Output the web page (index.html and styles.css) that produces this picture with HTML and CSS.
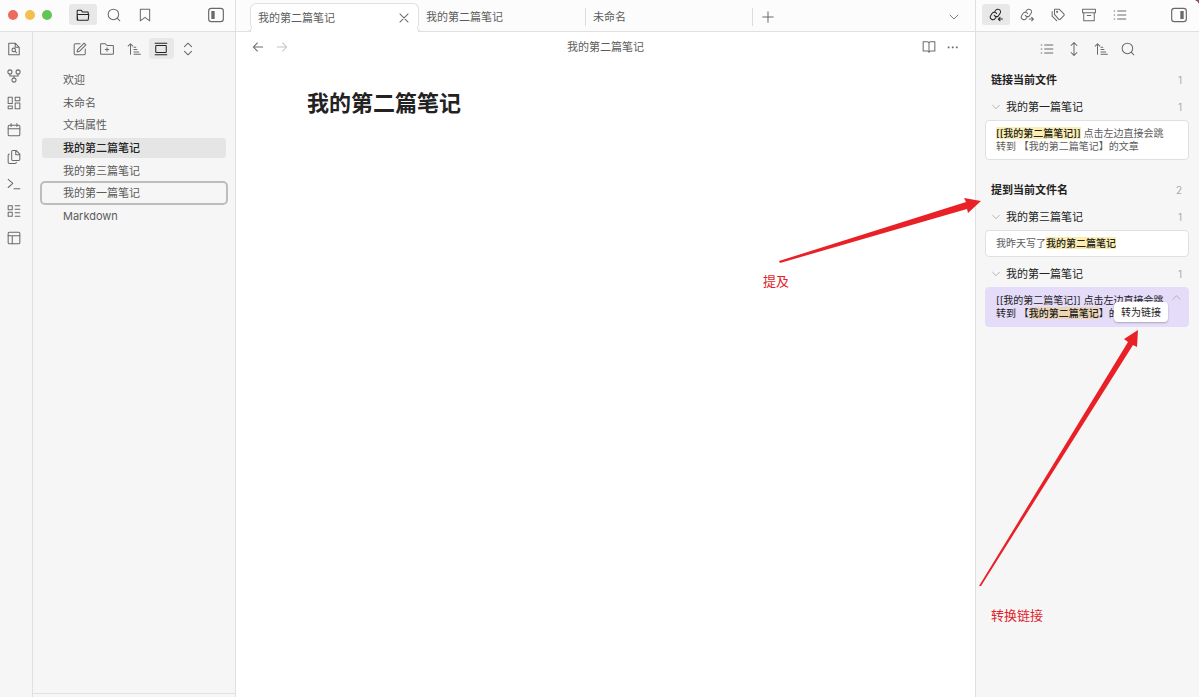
FILE: index.html
```html
<!DOCTYPE html>
<html lang="zh-CN">
<head>
  <meta charset="UTF-8" />
  <meta name="viewport" content="width=device-width, initial-scale=1.0" />
  <title>我的第二篇笔记</title>
  <link rel="stylesheet" href="styles.css">
</head>
<body>
  <!-- shared icons -->
  <svg class="sprite" aria-hidden="true">
    <symbol id="i-list" viewBox="0 0 24 24"><path d="M8 5h14M8 12h14M8 19h14M2 5h1M2 12h1M2 19h1"/></symbol>
    <symbol id="i-search" viewBox="0 0 24 24"><circle cx="11" cy="11" r="9"/><path d="m22 22-4.500-4.500"/></symbol>
    <symbol id="i-sort" viewBox="0 0 24 24"><path d="m2 7 4-4 4 4M6 3v18M12 9h3M12 13h5M12 17h8M12 21h11"/></symbol>
    <symbol id="i-down" viewBox="0 0 24 24"><path d="m4 8 8 8 8-8"/></symbol>
    <symbol id="i-link" viewBox="0 0 24 24"><path d="M9 12.500a4.500 4.500 0 0 0 7.500.5l2.500-4a4.500 4.500 0 0 0-7.500-5L10 6M13 9.500a4.500 4.500 0 0 0-7.500-.5L3 13a4.500 4.500 0 0 0 7.500 5l1.500-2"/></symbol>
  </svg>

  <div class="app">
    <aside class="left">
      <header class="topbar">
        <div class="lights"><i class="red"></i><i class="yellow"></i><i class="green"></i></div>
        <nav class="icons">
          <button class="active" aria-label="文件列表"><svg viewBox="0 0 24 24"><path d="M3 21a1 1 0 0 1-1-1V5a1 1 0 0 1 1-1h6l2.500 3H20a1 1 0 0 1 1 1v3M2 11h20l-1 9a1 1 0 0 1-1 1H3z"/></svg></button>
          <button aria-label="搜索"><svg><use href="#i-search"/></svg></button>
          <button aria-label="书签"><svg viewBox="0 0 24 24"><path d="M4 2h16v20l-8-6-8 6z"/></svg></button>
        </nav>
        <button class="toggle" aria-label="折叠左侧栏"><svg viewBox="0 0 24 24"><rect x="1" y="2" width="22" height="20" rx="4"/><path class="solid" d="M5 6h5v12H5z"/></svg></button>
      </header>
      <div class="left-body">
        <nav class="ribbon">
          <button aria-label="快速切换"><svg viewBox="0 0 24 24"><path d="M14 2H3v20h18V9zM14 2v7h7"/><circle cx="11.500" cy="13.500" r="3"/><path d="m14 16 2.500 2.500"/></svg></button>
          <button aria-label="关系图谱"><svg viewBox="0 0 24 24"><circle cx="5" cy="5" r="3.500"/><circle cx="19" cy="5" r="3.500"/><circle cx="12" cy="19" r="3.500"/><path d="M5 8.500V12h14V8.500M12 12v3.500"/></svg></button>
          <button aria-label="白板"><svg viewBox="0 0 24 24"><path d="M2 2h7v11H2zM14 2h8v6h-8zM14 12h8v10h-8zM2 17h7v5H2z"/></svg></button>
          <button aria-label="日记"><svg viewBox="0 0 24 24"><rect x="2" y="4" width="20" height="18" rx="2"/><path d="M2 10h20M7 1v5M17 1v5"/></svg></button>
          <button aria-label="模板"><svg viewBox="0 0 24 24"><path d="M16 1H10a2 2 0 0 0-2 2v13a2 2 0 0 0 2 2h10a2 2 0 0 0 2-2V7zM15 1v7h7M4 7a2 2 0 0 0-2 2v12a2 2 0 0 0 2 2h10a2 2 0 0 0 2-2"/></svg></button>
          <button aria-label="命令面板"><svg viewBox="0 0 24 24"><path d="m2 4 8 7-8 7M12 20h10"/></svg></button>
          <button aria-label="列表"><svg viewBox="0 0 24 24"><path d="M2 3h7v7H2zM2 14h7v7H2zM14 3h8M14 9h8M14 15h8M14 21h8"/></svg></button>
          <button aria-label="工作区"><svg viewBox="0 0 24 24"><rect x="2" y="2" width="20" height="20" rx="2"/><path d="M2 8h20M9 8v14"/></svg></button>
        </nav>
        <div class="files">
          <div class="tools">
            <button aria-label="新建笔记"><svg viewBox="0 0 24 24"><path d="M12 3H4a2 2 0 0 0-2 2v15a2 2 0 0 0 2 2h15a2 2 0 0 0 2-2v-8M19 2l3 3L11 16l-4 1 1-4z"/></svg></button>
            <button aria-label="新建文件夹"><svg viewBox="0 0 24 24"><path d="M1 20V4a1 1 0 0 1 1-1h7l3 3h10a1 1 0 0 1 1 1v13a1 1 0 0 1-1 1H2a1 1 0 0 1-1-1zM12 10v6M9 13h6"/></svg></button>
            <button aria-label="排序"><svg><use href="#i-sort"/></svg></button>
            <button class="active" aria-label="自动定位"><svg viewBox="0 0 24 24"><rect x="3" y="6" width="18" height="12" rx="1"/><path d="M2 2h20M2 22h20"/></svg></button>
            <button aria-label="展开全部"><svg viewBox="0 0 24 24"><path d="m6 8 6-6 6 6M6 16l6 6 6-6"/></svg></button>
          </div>
          <div class="file-list">
            <a href="#">欢迎</a>
            <a href="#">未命名</a>
            <a href="#">文档属性</a>
            <a href="#" class="current">我的第二篇笔记</a>
            <a href="#">我的第三篇笔记</a>
            <a href="#" class="focused">我的第一篇笔记</a>
            <a href="#">Markdown</a>
          </div>
          <div class="files-foot"></div>
        </div>
      </div>
    </aside>

    <main class="editor">
      <header class="topbar tabs">
        <div class="tab open">
          <span>我的第二篇笔记</span>
          <button aria-label="关闭"><svg viewBox="0 0 24 24"><path d="m5 5 14 14M19 5 5 19"/></svg></button>
        </div>
        <div class="tab"><span>我的第二篇笔记</span></div>
        <div class="tab"><span>未命名</span></div>
        <button class="add" aria-label="新标签页"><svg viewBox="0 0 24 24"><path d="M12 3v18M3 12h18"/></svg></button>
        <button class="more" aria-label="标签页列表"><svg><use href="#i-down"/></svg></button>
      </header>
      <div class="view-head">
        <div class="side">
          <button aria-label="后退"><svg viewBox="0 0 24 24"><path d="M20 12H4M11 5l-7 7 7 7"/></svg></button>
          <button aria-label="前进" class="dim"><svg viewBox="0 0 24 24"><path d="M4 12h16M13 5l7 7-7 7"/></svg></button>
        </div>
        <span>我的第二篇笔记</span>
        <div class="side end">
          <button aria-label="阅读视图"><svg viewBox="0 0 24 24"><path d="M12 6a3 3 0 0 0-3-3H2v16h7a3 3 0 0 1 3 2 3 3 0 0 1 3-2h7V3h-7a3 3 0 0 0-3 3zv15"/></svg></button>
          <button aria-label="更多"><svg viewBox="0 0 24 24"><path class="solid" d="M3 11h3v3H3zM10 11h3v3h-3zM17 11h3v3h-3z"/></svg></button>
        </div>
      </div>
      <h1>我的第二篇笔记</h1>
    </main>

    <aside class="right">
      <header class="topbar">
        <nav class="icons">
          <button class="active" aria-label="反向链接"><svg viewBox="0 0 24 24"><use href="#i-link"/><path d="M23 19h-7M19 16l-3 3 3 3"/></svg></button>
          <button aria-label="出链"><svg viewBox="0 0 24 24"><use href="#i-link"/><path d="M16 19h7M20 16l3 3-3 3"/></svg></button>
          <button aria-label="标签"><svg viewBox="0 0 24 24"><path d="M6 2h8l8 8a2 2 0 0 1 0 3l-6 6a2 2 0 0 1-3 0l-7-8zM2 6v8l8 8"/><circle cx="10.500" cy="6.500" r="1"/></svg></button>
          <button aria-label="归档"><svg viewBox="0 0 24 24"><path d="M1 2h22v6H1zM3 8v14h18V8M9 13h6"/></svg></button>
          <button aria-label="大纲"><svg><use href="#i-list"/></svg></button>
        </nav>
        <button class="toggle" aria-label="折叠右侧栏"><svg viewBox="0 0 24 24"><rect x="1" y="2" width="22" height="20" rx="4"/><path class="solid" d="M14 6h5v12h-5z"/></svg></button>
      </header>
      <div class="tools">
        <button aria-label="折叠结果"><svg><use href="#i-list"/></svg></button>
        <button aria-label="显示更多上下文"><svg viewBox="0 0 24 24"><path d="M12 1v22M7 6l5-5 5 5M7 18l5 5 5-5"/></svg></button>
        <button aria-label="排序"><svg><use href="#i-sort"/></svg></button>
        <button aria-label="搜索"><svg><use href="#i-search"/></svg></button>
      </div>

      <section>
        <h2>链接当前文件 <small>1</small></h2>
        <h3><svg><use href="#i-down"/></svg>我的第一篇笔记 <small>1</small></h3>
        <div class="card"><mark>[[我的第二篇笔记]]</mark> 点击左边直接会跳转到 【我的第二篇笔记】的文章</div>
      </section>
      <section>
        <h2>提到当前文件名 <small>2</small></h2>
        <h3><svg><use href="#i-down"/></svg>我的第三篇笔记 <small>1</small></h3>
        <div class="card">我昨天写了<mark>我的第二篇笔记</mark></div>
        <h3><svg><use href="#i-down"/></svg>我的第一篇笔记 <small>1</small></h3>
        <div class="card hover">
          [[我的第二篇笔记]] 点击左边直接会跳转到 【<mark>我的第二篇笔记</mark>】的文章
          <svg class="up" viewBox="0 0 24 24"><path d="m4 16 8-8 8 8"/></svg>
          <button class="to-link">转为链接</button>
        </div>
      </section>
    </aside>

    <!-- red notes on top of the window -->
    <svg class="arrows" viewBox="0 0 440 400" aria-hidden="true">
      <path d="M20 71 207 12 205 8 222 11 209 23 208 19 21 73z"/>
      <path d="M220 396 369 152 365 149 379 140 378 157 374 155 222 396z"/>
    </svg>
    <span class="note mention">提及</span>
    <span class="note convert">转换链接</span>
  </div>
</body>
</html>
```

FILE: styles.css
```css
* {
  box-sizing: border-box;
}
body {
  margin: 0;
  background: #8d4b6b;
  font-family: Inter, 'Noto Sans CJK SC', sans-serif;
  font-size: 11px;
  line-height: 16px;
  color: #5c5c5c;
}
button {
  display: flex;
  align-items: center;
  justify-content: center;
  padding: 0;
  border: none;
  border-radius: 3px;
  background: none;
  color: #6a6a6a;
  font: inherit;
  cursor: pointer;
}
a {
  color: inherit;
  text-decoration: none;
}
svg {
  width: 14px;
  height: 14px;
  flex: none;
  fill: none;
  stroke: currentColor;
  stroke-width: 1.75;
  stroke-linejoin: round;
  stroke-linecap: round;
}
.solid {
  fill: currentColor;
  stroke: none;
}
.sprite {
  display: none;
}
.app {
  position: relative;
  display: flex;
  min-height: 100vh;
  background: #fff;
  border-top-right-radius: 6px;
  overflow: hidden;
}
.topbar {
  display: flex;
  align-items: center;
  height: 32px;
  padding-bottom: 2px;
  background: #fcfcfc;
  border-bottom: 1px solid #e0e0e0;
}

/* icon buttons */
.icons {
  display: flex;
  gap: 3px;
}
.icons button {
  width: 28px;
  height: 21px;
}
.tools {
  display: flex;
  justify-content: center;
  gap: 2px;
  padding: 6px 0 8px;
}
.tools button {
  width: 25px;
  height: 21px;
}
button.active {
  background: #e8e8e8;
  color: #222;
}
.toggle {
  margin-left: auto;
}
.toggle svg {
  width: 16px;
  height: 16px;
}

/* left sidebar */
.left {
  display: flex;
  flex-direction: column;
  width: 236px;
  flex: none;
  background: #f6f6f6;
  border-right: 1px solid #e0e0e0;
}
.left .topbar {
  padding-right: 11px;
}
.lights {
  display: flex;
  gap: 7px;
  padding: 0 17px 0 8px;
}
.lights i {
  width: 10px;
  height: 10px;
  border-radius: 50%;
}
.red { background: #ed6a5e; }
.yellow { background: #f5bf4f; }
.green { background: #61c554; }
.left-body {
  display: flex;
  flex: 1;
}
.ribbon {
  display: flex;
  flex-direction: column;
  gap: 6px;
  width: 33px;
  padding: 6px 0 0 3px;
  border-right: 1px solid #e0e0e0;
}
.ribbon button {
  width: 21px;
  height: 21px;
}
.files {
  display: flex;
  flex-direction: column;
  flex: 1;
}
.file-list {
  display: grid;
  grid-auto-rows: 1fr;
  gap: 2px;
  height: 156px;
  margin: 3px 9px 0;
}
.file-list a {
  display: flex;
  align-items: center;
  padding-left: 21px;
  border-radius: 3px;
}
.file-list .current {
  background: #e5e5e5;
  color: #222;
  font-weight: 500;
}
.file-list .focused {
  box-shadow: 0 0 0 2px #bdbdbd;
}
.files-foot {
  height: 4px;
  margin-top: auto;
  border-top: 1px solid #e0e0e0;
}

/* editor */
.editor {
  flex: 1;
  min-width: 0;
}
.tabs {
  padding: 2px 15px 0 14px;
}
.tab {
  position: relative;
  display: flex;
  align-items: center;
  justify-content: space-between;
  flex: 0 1 167px;
  padding: 0 7px;
}
.tab:not(.open) {
  height: 18px;
  border-right: 1px solid #dcdcdc;
}
.tab.open {
  flex-basis: 169px;
  height: 29px;
  align-self: flex-end;
  margin-bottom: -1px;
  background: #fff;
  border: 1px solid #e0e0e0;
  border-bottom: none;
  border-radius: 6px 6px 0 0;
}
/* curved feet of the open tab */
.tab.open::before,
.tab.open::after {
  content: '';
  position: absolute;
  bottom: 0;
  width: 5px;
  height: 5px;
  border-bottom: 1px solid #e0e0e0;
  background: #fcfcfc;
}
.tab.open::before {
  left: -5px;
  border-right: 1px solid #e0e0e0;
  border-bottom-right-radius: 5px;
}
.tab.open::after {
  right: -5px;
  border-left: 1px solid #e0e0e0;
  border-bottom-left-radius: 5px;
}
.add {
  margin-left: 8px;
}
.more {
  margin-left: auto;
}
.more svg {
  width: 12px;
  height: 12px;
}
.view-head {
  display: flex;
  align-items: center;
  justify-content: space-between;
  height: 30px;
  padding: 0 15px;
}
.side {
  display: flex;
  gap: 10px;
  width: 60px;
}
.end {
  justify-content: flex-end;
}
.side .dim {
  color: #c4c4c4;
}
h1 {
  margin: 26px 71px 0;
  font-size: 22px;
  line-height: 30px;
  color: #222;
}

/* right sidebar */
.right {
  width: 224px;
  flex: none;
  background: #f6f6f6;
  border-left: 1px solid #e0e0e0;
}
.right .topbar {
  padding-left: 6px;
  padding-right: 12px;
}
.right section {
  padding: 0 10px 14px 9px;
}
h2,
h3 {
  display: flex;
  align-items: center;
  margin: 0;
  padding: 0 7px 0 6px;
  font-size: 11px;
  color: #222;
}
h2 {
  height: 26px;
}
h3 {
  height: 27px;
  font-weight: 400;
}
h3 svg {
  width: 10px;
  height: 10px;
  margin-right: 5px;
  color: #999;
}
small {
  margin-left: auto;
  font-size: 10px;
  font-weight: 400;
  color: #aaa;
}
.card {
  position: relative;
  margin-bottom: 3px;
  padding: 6px 20px 6px 10px;
  border: 1px solid #e0e0e0;
  border-radius: 4px;
  background: #fff;
  font-size: 10px;
  line-height: 13px;
}
mark {
  background: #fbeeb0;
  color: #222;
  font-weight: 500;
}
.card.hover {
  background: #e4dcf8;
  border-color: #e4dcf8;
  color: #222;
}
.hover mark {
  background: #ecd5b5;
}
.up {
  position: absolute;
  top: 4px;
  right: 6px;
  width: 11px;
  height: 11px;
  color: #aaa;
}
.to-link {
  position: absolute;
  right: 20px;
  bottom: 4px;
  height: 20px;
  padding: 0 7px;
  border-radius: 4px;
  background: #fff;
  box-shadow: 0 1px 2px rgba(0, 0, 0, 0.25);
  color: #222;
}

/* notes */
.arrows {
  position: absolute;
  top: 190px;
  right: 0;
  width: 440px;
  height: 400px;
  fill: #ea2027;
  stroke: none;
  pointer-events: none;
}
.note {
  position: absolute;
  font-size: 13px;
  color: #e0242b;
}
.mention {
  top: 273px;
  right: 410px;
}
.convert {
  top: 607px;
  right: 156px;
}
```
